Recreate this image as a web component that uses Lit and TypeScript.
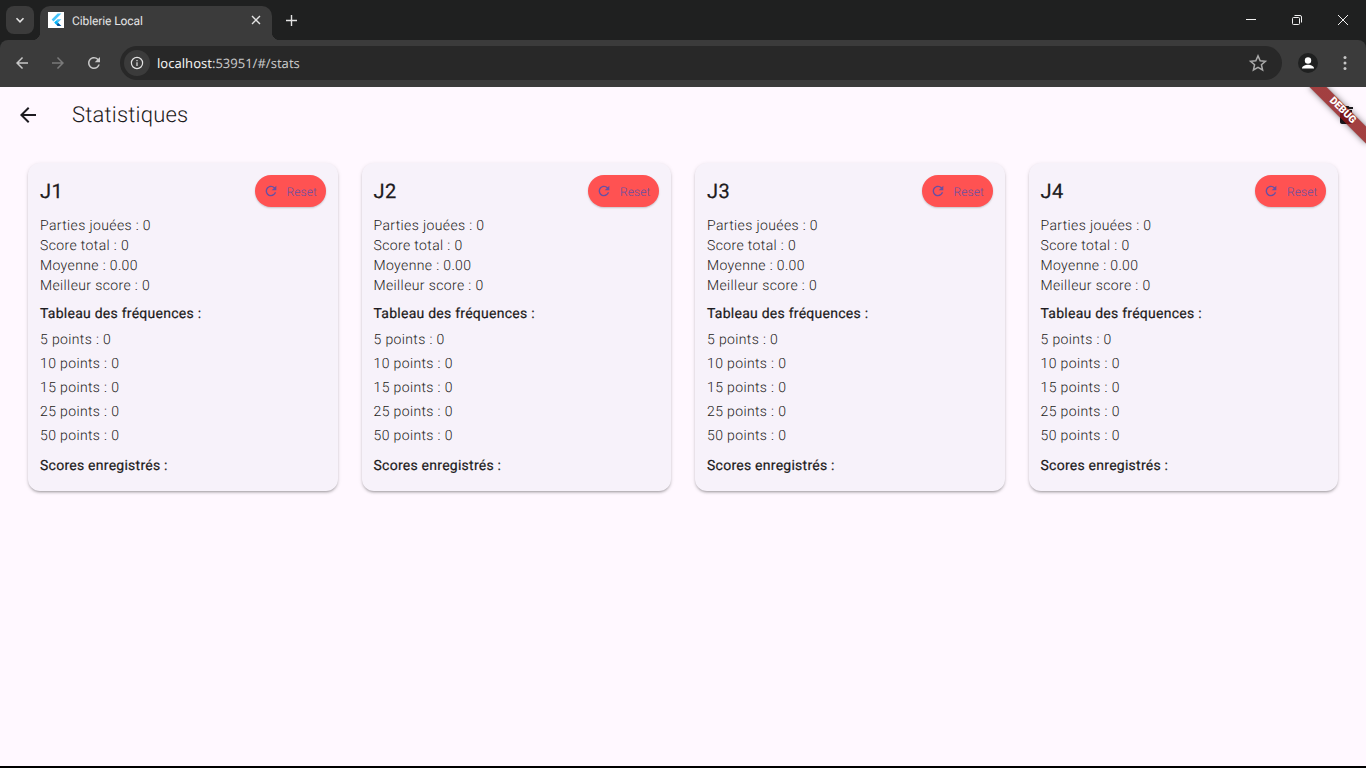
import { LitElement, html, css } from 'lit';
import { customElement } from 'lit/decorators.js';

const PLAYERS = ['J1', 'J2', 'J3', 'J4'];
const POINTS = [5, 10, 15, 25, 50];

const back = (color: string, size: number) => html`<svg width="${size}" height="${size}" viewBox="0 0 24 24" fill="${color}"><path d="M20 11H7.83l5.59-5.59L12 4l-8 8 8 8 1.41-1.41L7.83 13H20v-2z"/></svg>`;
const forward = (color: string, size: number) => html`<svg width="${size}" height="${size}" viewBox="0 0 24 24" fill="${color}"><path d="M4 11h12.170l-5.590-5.590L12 4l8 8-8 8-1.410-1.410L16.170 13H4v-2z"/></svg>`;
const refresh = (color: string, size: number) => html`<svg width="${size}" height="${size}" viewBox="0 0 24 24" fill="${color}"><path d="M17.65 6.35A7.958 7.958 0 0 0 12 4c-4.42 0-7.99 3.58-7.99 8s3.57 8 7.99 8c3.73 0 6.84-2.55 7.73-6h-2.08A5.99 5.99 0 0 1 12 18c-3.31 0-6-2.69-6-6s2.69-6 6-6c1.66 0 3.14.69 4.22 1.78L13 11h7V4l-2.35 2.35z"/></svg>`;

@customElement('app-root')
export class AppRoot extends LitElement {
    static styles = css`
        :host {
            display: block;
            height: 768px;
            overflow: hidden;
            position: relative;
            background: #000;
            font-family: Roboto, sans-serif;
            text-rendering: geometricPrecision;
        }

        .chrome {
            background: #1f2020;
        }

        .tabstrip {
            height: 40px;
            display: flex;
            align-items: flex-end;
            padding-left: 6px;
            color: #e3e3e3;
        }

        .tabsearch {
            width: 28px;
            height: 28px;
            margin: 0 6px 6px 0;
            border-radius: 8px;
            background: #3b3b3b;
            display: flex;
            align-items: center;
            justify-content: center;
        }

        .tab {
            width: 232px;
            height: 34px;
            background: #3b3b3b;
            border-radius: 10px 10px 0 0;
            display: flex;
            align-items: center;
            padding: 0 11px 6px 8px;
            box-sizing: border-box;
            position: relative;
            font: 12px Roboto, sans-serif;
        }

        .tab::before,
        .tab::after {
            content: '';
            position: absolute;
            bottom: 0;
            width: 8px;
            height: 8px;
        }

        .tab::before {
            left: -8px;
            background: radial-gradient(circle at 0 0, transparent 8px, #3b3b3b 8.500px);
        }

        .tab::after {
            right: -8px;
            background: radial-gradient(circle at 100% 0, transparent 8px, #3b3b3b 8.500px);
        }

        .favicon {
            width: 16px;
            height: 16px;
            background: #fff;
            margin-right: 8px;
            display: block;
        }

        .tab-title {
            flex: 1;
            padding-top: 2px;
            letter-spacing: -.1px;
        }

        .newtab {
            margin: 0 0 6px 14px;
            width: 16px;
            height: 28px;
            display: flex;
            align-items: center;
        }

        .winctl {
            margin-left: auto;
            display: flex;
            align-self: stretch;
        }

        .winctl span {
            width: 46px;
            display: flex;
            align-items: center;
            justify-content: center;
        }

        .toolbar {
            height: 47px;
            background: #3b3b3b;
            border-radius: 8px 8px 0 0;
            display: flex;
            align-items: center;
            padding: 0 0 1px 13px;
            box-sizing: border-box;
        }

        .navbtn {
            width: 18px;
            height: 18px;
            margin-right: 18px;
            display: flex;
        }

        .omnibox {
            flex: 1;
            height: 34px;
            margin: 0 10px 0 -1px;
            background: #282828;
            border-radius: 17px;
            display: flex;
            align-items: center;
            padding-left: 4px;
            font: 13px 'Noto Sans', 'Open Sans', sans-serif;
            color: #c7c7c7;
        }

        .info {
            width: 26px;
            height: 26px;
            border-radius: 50%;
            background: #3b3b3b;
            display: flex;
            align-items: center;
            justify-content: center;
            margin-right: 7px;
        }

        .host { color: #f1f1f1; }

        .star { margin-left: auto; margin-right: 14px; display: flex; }

        .avatar {
            width: 20px;
            height: 20px;
            border-radius: 50%;
            background: #1f2020;
            overflow: hidden;
            margin-right: 25px;
            margin-left: 6px;
            display: flex;
        }

        .menu { margin-right: 19px; display: flex; }

        .app {
            height: 679px;
            background: #fff8ff;
            position: relative;
            overflow: hidden;
        }

        .appbar {
            height: 56px;
            display: flex;
            align-items: center;
            padding-left: 16px;
            color: #1d1b20;
        }

        .appbar svg { display: block; }

        .appbar h1 {
            margin: 0 0 0 32px;
            padding-top: 2px;
            font: 300 22px/28px Roboto, sans-serif;
            letter-spacing: .2px;
        }

        .grid {
            display: grid;
            grid-template-columns: repeat(4, 1fr);
            gap: 24px;
            padding: 20px 28px 0;
        }

        .card {
            background: #f7f2fa;
            border-radius: 12px;
            padding: 12px;
            height: 328px;
            box-sizing: border-box;
            box-shadow: 0 2px 3px -1px rgba(0, 0, 0, .35), 0 1px 4px rgba(0, 0, 0, .1);
            color: #1d1b20;
        }

        .head {
            display: flex;
            justify-content: space-between;
            align-items: center;
            height: 32px;
            margin-bottom: 9px;
        }

        .head h2 {
            margin: 0;
            font: 400 20px/28px Roboto, sans-serif;
            letter-spacing: .4px;
            -webkit-text-stroke: .25px #1d1b20;
        }

        .reset {
            width: 71px;
            height: 32px;
            border-radius: 16px;
            background: #ff5252;
            box-shadow: 0 1px 2px rgba(0, 0, 0, .2);
            display: flex;
            align-items: center;
            padding-left: 8px;
            box-sizing: border-box;
            color: #6750a4;
            font: 300 12px/16px Roboto, sans-serif;
            letter-spacing: .1px;
        }

        .reset svg { margin-right: 8px; }

        .reset span { padding-top: 1px; }

        .line {
            font: 300 14px/20px Roboto, sans-serif;
            letter-spacing: .37px;
        }

        .sub {
            font: 400 14px/20px Roboto, sans-serif;
            letter-spacing: .25px;
            -webkit-text-stroke: .2px #1d1b20;
        }

        .freq-title { margin-top: 8px; margin-bottom: 4px; }

        .freq { padding: 2px 0; }

        .scores-title { margin-top: 8px; }

        .trash {
            position: absolute;
            top: 16px;
            right: 8px;
        }

        .banner {
            position: absolute;
            top: 18px;
            right: -16px;
            width: 80px;
            height: 12px;
            background: linear-gradient(rgba(183, 28, 28, .63), rgba(183, 28, 28, .63)), rgba(0, 0, 0, .5);
            box-shadow: 0 0 6px rgba(0, 0, 0, .5);
            transform: rotate(45deg);
            color: #fff;
            font: 900 10.2px/12px Roboto, sans-serif;
            text-align: center;
        }

        .edge {
            position: absolute;
            left: 0;
            right: 0;
            bottom: 0;
            height: 2px;
            background: #000;
        }
    `;

    private card(name: string) {
        return html`
            <div class="card">
                <div class="head">
                    <h2>${name}</h2>
                    <div class="reset">${refresh('#6750a4', 16)}<span>Reset</span></div>
                </div>
                <div class="line">Parties jouées : 0</div>
                <div class="line">Score total : 0</div>
                <div class="line">Moyenne : 0.00</div>
                <div class="line">Meilleur score : 0</div>
                <div class="sub freq-title">Tableau des fréquences :</div>
                ${POINTS.map(p => html`<div class="line freq">${p} points : 0</div>`)}
                <div class="sub scores-title">Scores enregistrés :</div>
            </div>
        `;
    }

    render() {
        return html`
            <div class="chrome">
                <div class="tabstrip">
                    <div class="tabsearch">
                        <svg width="10" height="10" viewBox="0 0 10 10" fill="none" stroke="#e3e3e3" stroke-width="1.6"><path d="M1.500 3.300 5 6.800l3.500-3.500"/></svg>
                    </div>
                    <div class="tab">
                        <svg class="favicon" viewBox="0 0 16 16">
                            <path fill="#47c5fb" d="M9.600 1.500 3.600 7.600l1.900 1.900 7.900-8z"/>
                            <path fill="#47c5fb" d="M9.500 7.300 6.300 10.600l1.900 1.900 5.100-5.200z"/>
                            <path fill="#00569e" d="M8.200 12.500l1.400 1.600h3.800l-3.300-3.300z"/>
                            <path fill="#00b5f8" d="M6.300 10.600l1.900-1.900 1.900 1.900-1.900 1.900z"/>
                        </svg>
                        <span class="tab-title">Ciblerie Local</span>
                        <svg width="10" height="10" viewBox="0 0 10 10" stroke="#e3e3e3" stroke-width="1.400"><path d="M1 1l8 8M9 1l-8 8"/></svg>
                    </div>
                    <div class="newtab">
                        <svg width="11" height="11" viewBox="0 0 11 11" stroke="#e3e3e3" stroke-width="1.400"><path d="M5.500 0v11M0 5.500h11"/></svg>
                    </div>
                    <div class="winctl">
                        <span><svg width="10" height="2" viewBox="0 0 10 2"><path d="M0 .5h10" stroke="#f1f1f1"/></svg></span>
                        <span><svg width="10" height="10" viewBox="0 0 10 10" fill="none" stroke="#f1f1f1"><rect x=".5" y="2.500" width="7" height="7" rx="1"/><path d="M2.500 .5H8a1.500 1.500 0 0 1 1.500 1.500v5.500"/></svg></span>
                        <span><svg width="10" height="10" viewBox="0 0 10 10" stroke="#f1f1f1"><path d="M0 0l10 10M10 0l-10 10"/></svg></span>
                    </div>
                </div>
                <div class="toolbar">
                    <div class="navbtn">${back('#c7c7c7', 18)}</div>
                    <div class="navbtn">${forward('#7a7a7a', 18)}</div>
                    <div class="navbtn">${refresh('#c7c7c7', 18)}</div>
                    <div class="omnibox">
                        <div class="info">
                            <svg width="14" height="14" viewBox="0 0 14 14" fill="none" stroke="#e3e3e3" stroke-width="1.200"><circle cx="7" cy="7" r="5.600"/><path d="M7 6.200v3.800M7 4v1.200"/></svg>
                        </div>
                        <span class="host">localhost</span>:53951/#/stats
                        <div class="star">
                            <svg width="20" height="20" viewBox="0 0 24 24" fill="none" stroke="#aaaaaa" stroke-width="1.800"><path d="M12 3.500l2.600 5.800 6.300.6-4.800 4.200 1.400 6.200L12 17.100l-5.500 3.200 1.400-6.200-4.800-4.200 6.300-.6z"/></svg>
                        </div>
                    </div>
                    <div class="avatar">
                        <svg width="20" height="20" viewBox="0 0 20 20" fill="#fff"><circle cx="10" cy="7.500" r="3.200"/><path d="M4 15.500c0-2.500 3.500-3.700 6-3.700s6 1.200 6 3.700z"/></svg>
                    </div>
                    <div class="menu">
                        <svg width="4" height="16" viewBox="0 0 4 16" fill="#c7c7c7"><circle cx="2" cy="2.500" r="1.500"/><circle cx="2" cy="8" r="1.500"/><circle cx="2" cy="13.500" r="1.500"/></svg>
                    </div>
                </div>
            </div>
            <div class="app">
                <div class="appbar">
                    ${back('#1d1b20', 24)}
                    <h1>Statistiques</h1>
                </div>
                <svg class="trash" width="24" height="24" viewBox="0 0 24 24" fill="#1d1b20"><path d="M6 19c0 1.100.9 2 2 2h8c1.100 0 2-.9 2-2V7H6v12zM19 4h-3.500l-1-1h-5l-1 1H5v2h14V4z"/></svg>
                <div class="grid">${PLAYERS.map(p => this.card(p))}</div>
                <div class="banner">DEBUG</div>
            </div>
            <div class="edge"></div>
        `;
    }
}
